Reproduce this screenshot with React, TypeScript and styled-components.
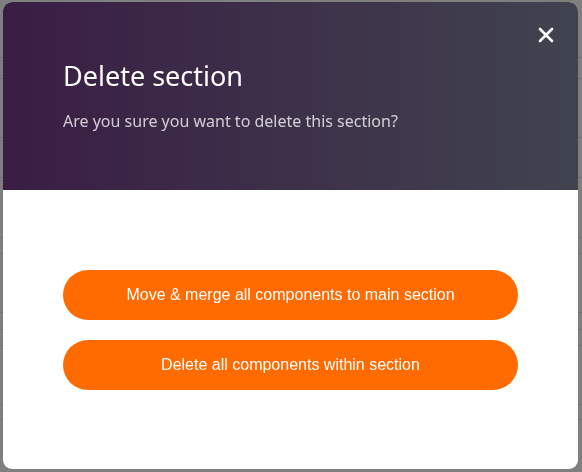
import React from "react";
import styled, { createGlobalStyle } from "styled-components";

const Global = createGlobalStyle`
  html, body { margin: 0; padding: 0; background: #fff; }
  body { font-family: "Noto Sans", Arial, sans-serif; }
  * { box-sizing: border-box; }
`;

const Page = styled.div`
  display: flex;
  flex-direction: column;
  width: 582px;
  height: 472px;
  overflow: hidden;
`;

const Row = styled.div<{ $h: number }>`
  height: ${(p) => p.$h}px;
  flex: none;
  border-bottom: 1px solid #dcdcdc;
  display: flex;
  align-items: center;
  justify-content: flex-end;
  padding-right: 45px;
  font-family: "Liberation Sans", Arial, sans-serif;
  font-weight: 700;
  font-size: 13px;
  color: #000;
  text-transform: uppercase;
`;

const Backdrop = styled.div`
  position: fixed;
  inset: 0;
  background: rgba(0, 0, 0, 0.5);
  display: flex;
  padding: 2px 4px 3px 3px;
`;

const Modal = styled.div`
  flex: 1;
  display: flex;
  flex-direction: column;
  border-radius: 9px;
  overflow: hidden;
  background: #fff;
  position: relative;
`;

const Header = styled.div`
  height: 188px;
  flex: none;
  background: linear-gradient(90deg, rgba(50, 20, 60, 0.96) 0%, rgba(56, 60, 72, 0.96) 100%);
  display: flex;
  flex-direction: column;
  padding: 55px 60px 0 60px;
`;

const Title = styled.h2`
  margin: 0;
  font-family: "Noto Sans", sans-serif;
  font-weight: 400;
  font-size: 27px;
  line-height: 38px;
  color: #fff;
`;

const Subtitle = styled.p`
  margin: 15px 0 0 0;
  font-family: "Noto Sans", sans-serif;
  font-size: 16px;
  line-height: 22px;
  color: rgba(255, 255, 255, 0.76);
`;

const Close = styled.button`
  position: absolute;
  top: 18px;
  right: 17px;
  width: 30px;
  height: 30px;
  padding: 0;
  border: none;
  background: transparent;
  display: flex;
  align-items: center;
  justify-content: center;
  cursor: pointer;
`;

const Body = styled.div`
  flex: 1;
  display: flex;
  flex-direction: column;
  justify-content: center;
  gap: 20px;
  padding: 0 60px;
`;

const ActionButton = styled.button`
  height: 50px;
  border: none;
  border-radius: 25px;
  background: #ff6b00;
  color: #fff;
  font-family: "Liberation Sans", Arial, sans-serif;
  font-size: 16px;
  cursor: pointer;
`;

export default function App() {
  return (
    <>
      <Global />
      <Page>
        <Row $h={58} />
        <Row $h={21}>Click here to add new section</Row>
        <Row $h={59} />
        <Row $h={40}>Quantity</Row>
        <Row $h={60} />
        <Row $h={16} />
        <Row $h={59} />
        <Row $h={17} />
        <Row $h={16} />
        <Row $h={59} />
        <Row $h={15} />
      </Page>
      <Backdrop>
        <Modal>
          <Header>
            <Title>Delete section</Title>
            <Subtitle>Are you sure you want to delete this section?</Subtitle>
          </Header>
          <Close aria-label="Close">
            <svg width="16" height="16" viewBox="0 0 16 16">
              <path d="M2 2 L14 14 M14 2 L2 14" stroke="#fff" strokeWidth="2.6" strokeLinecap="round" />
            </svg>
          </Close>
          <Body>
            <ActionButton>Move &amp; merge all components to main section</ActionButton>
            <ActionButton>Delete all components within section</ActionButton>
          </Body>
        </Modal>
      </Backdrop>
    </>
  );
}
